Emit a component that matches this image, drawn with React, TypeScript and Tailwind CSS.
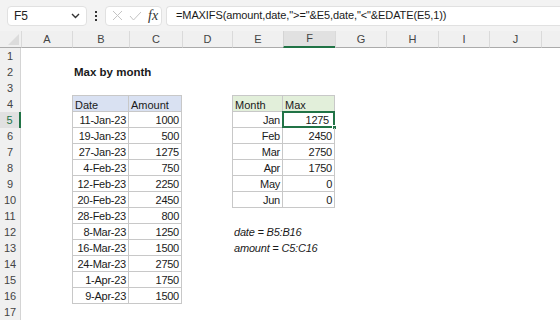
import React from "react";

const COLS = ["A", "B", "C", "D", "E", "F", "G", "H", "I", "J", ""];
const font = { fontFamily: '"Liberation Sans", Arial, sans-serif' };

type Cell = {
  text?: string;
  align?: "l" | "r";
  kind?: "blueH" | "greenH" | "tbl" | "title" | "note";
  first?: boolean;
  top?: boolean;
  sel?: boolean;
};

const dates = [
  ["11-Jan-23", "1000"],
  ["19-Jan-23", "500"],
  ["27-Jan-23", "1275"],
  ["4-Feb-23", "750"],
  ["12-Feb-23", "2250"],
  ["20-Feb-23", "2450"],
  ["28-Feb-23", "800"],
  ["8-Mar-23", "1250"],
  ["16-Mar-23", "1500"],
  ["24-Mar-23", "2750"],
  ["1-Apr-23", "1750"],
  ["9-Apr-23", "1500"],
];
const months = [
  ["Jan", "1275"],
  ["Feb", "2450"],
  ["Mar", "2750"],
  ["Apr", "1750"],
  ["May", "0"],
  ["Jun", "0"],
];

function buildRow(r: number): Record<number, Cell> {
  const m: Record<number, Cell> = {};
  if (r === 2) m[1] = { text: "Max by month", kind: "title" };
  if (r === 4) {
    m[1] = { text: "Date", align: "l", kind: "blueH", first: true, top: true };
    m[2] = { text: "Amount", align: "l", kind: "blueH", top: true };
    m[4] = { text: "Month", align: "l", kind: "greenH", first: true, top: true };
    m[5] = { text: "Max", align: "l", kind: "greenH", top: true };
  }
  if (r >= 5 && r <= 16) {
    const d = dates[r - 5];
    m[1] = { text: d[0], align: "r", kind: "tbl", first: true };
    m[2] = { text: d[1], align: "r", kind: "tbl" };
  }
  if (r >= 5 && r <= 10) {
    const d = months[r - 5];
    m[4] = { text: d[0], align: "r", kind: "tbl", first: true };
    m[5] = { text: d[1], align: "r", kind: "tbl", sel: r === 5 };
  }
  if (r === 12) m[4] = { text: "date = B5:B16", kind: "note" };
  if (r === 13) m[4] = { text: "amount = C5:C16", kind: "note" };
  return m;
}

function CellView({ c }: { c?: Cell }) {
  if (!c) return <div className="h-4" />;
  let cls = "relative h-4 text-[11px] leading-[16px] text-[#1a1a1a] whitespace-nowrap pl-[2px] ";
  cls += c.sel ? "pr-[5px] " : "pr-[2px] ";
  if (c.kind === "blueH" || c.kind === "greenH" || c.kind === "tbl") {
    cls += "border-r border-b border-[#c8c8c8] ";
    if (c.first) cls += "border-l ";
    if (c.top) cls += "border-t ";
    if (c.kind === "blueH") cls += "bg-[#d9e1f2] ";
    if (c.kind === "greenH") cls += "bg-[#e2efda] ";
    cls += c.align === "r" ? "text-right tracking-[-0.25px] " : "text-left ";
  }
  if (c.kind === "title") cls += "font-bold !text-[11.5px] ";
  if (c.kind === "note") cls += "italic tracking-[-0.2px] overflow-visible ";
  return (
    <div className={cls} style={c.top ? { marginTop: -1, height: 17 } : undefined}>
      <span className={c.top ? "block pt-[1px]" : ""}>{c.text}</span>
      {c.sel && (
        <>
          <div className="absolute -left-[1px] -top-[1px] -right-[1px] -bottom-[1px] border-2 border-[#217346]" />
          <div className="absolute -right-[3px] -bottom-[3px] w-[5px] h-[5px] bg-[#217346] border border-white" />
        </>
      )}
    </div>
  );
}

export default function App() {
  const rows = Array.from({ length: 17 }, (_, i) => i + 1);
  return (
    <div className="w-[560px] h-[320px] overflow-hidden bg-white" style={font}>
      {/* Formula bar */}
      <div className="h-[31px] bg-[#f3f3f3] flex items-center pl-[7px] gap-0">
        <div className="w-[80px] h-[20px] bg-white border border-[#e1e1e1] rounded-[4px] flex items-center justify-between pl-[6px] pr-[6px]">
          <span className="text-[12px] text-[#222]">F5</span>
          <svg width="9" height="6" viewBox="0 0 9 6">
            <path d="M1 1 L4.5 4.5 L8 1" stroke="#333" strokeWidth="1.4" fill="none" />
          </svg>
        </div>
        <div className="w-[18px] flex flex-col items-center justify-center gap-[2px]">
          <div className="w-[2px] h-[2px] bg-[#333]" />
          <div className="w-[2px] h-[2px] bg-[#333]" />
          <div className="w-[2px] h-[2px] bg-[#333]" />
        </div>
        <div className="w-[57px] h-[20px] bg-white border border-[#e1e1e1] rounded-[4px] flex items-center pl-[6px] gap-[6px]">
          <svg width="11" height="11" viewBox="0 0 11 11">
            <path d="M1 1 L10 10 M10 1 L1 10" stroke="#c4c4c4" strokeWidth="1" fill="none" />
          </svg>
          <svg width="13" height="10" viewBox="0 0 13 10">
            <path d="M1 5 L4.5 9 L12 1" stroke="#c4c4c4" strokeWidth="1" fill="none" />
          </svg>
          <span
            className="text-[14px] italic text-[#333] leading-none"
            style={{ fontFamily: '"Liberation Serif", "Times New Roman", serif' }}
          >
            fx
          </span>
        </div>
        <div className="ml-[4px] flex-1 h-[20px] bg-white border border-[#e1e1e1] rounded-l-[4px] border-r-0 flex items-center pl-[9px]">
          <span className="text-[11px] tracking-[-0.1px] text-[#1a1a1a] whitespace-nowrap">
            =MAXIFS(amount,date,"&gt;="&amp;E5,date,"&lt;"&amp;EDATE(E5,1))
          </span>
        </div>
      </div>

      {/* Sheet grid */}
      <div className="grid grid-cols-[21px_51px_57px_53px_50px_51px_52px_51px_52px_51px_52px_1fr]">
        <div className="h-[17px] bg-[#f0f0f0] border-b border-[#ababab] relative">
          <svg className="absolute right-[2px] bottom-[2px]" width="11" height="11" viewBox="0 0 11 11">
            <path d="M11 0 L11 11 L0 11 Z" fill="#dcdcdc" />
          </svg>
        </div>
        {COLS.map((l, i) => (
          <div
            key={i}
            className={
              "h-[17px] flex items-center justify-center text-[11px] text-[#444] border-l " +
              (l === "F"
                ? "bg-[#e1e1e1] border-b-2 border-b-[#217346] border-l-[#d4d4d4]"
                : "bg-[#f0f0f0] border-b border-b-[#ababab] border-l-[#dadada]")
            }
          >
            {l}
          </div>
        ))}
        {rows.map((r) => {
          const m = buildRow(r);
          return (
            <React.Fragment key={r}>
              <div
                className={
                  "h-4 flex items-center justify-center text-[11px] " +
                  (r === 5
                    ? "bg-[#e1e1e1] border-r-2 border-[#217346] text-[#217346]"
                    : "bg-[#f0f0f0] border-r border-[#d4d4d4] text-[#444]")
                }
              >
                {r}
              </div>
              {COLS.map((_, ci) => (
                <CellView key={ci} c={m[ci]} />
              ))}
            </React.Fragment>
          );
        })}
      </div>
    </div>
  );
}
